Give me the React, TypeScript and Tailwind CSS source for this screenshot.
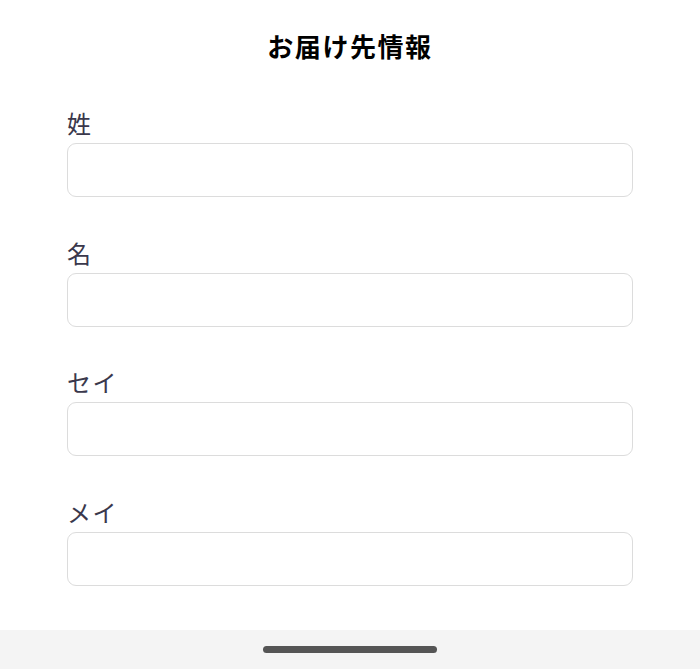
import React from "react";

const fields = ["姓", "名", "セイ", "メイ"];

export default function App() {
  return (
    <div
      className="w-[700px] h-[669px] flex flex-col bg-white"
      style={{ fontFamily: '"Noto Sans CJK JP", "Noto Sans", sans-serif' }}
    >
      <div className="flex-1 px-[67px] pt-[28px]">
        <h1 className="h-[36px] leading-[36px] text-center text-[26px] font-bold tracking-[0.06em] text-black">
          お届け先情報
        </h1>
        <div className="mt-[43px] flex flex-col gap-[39.5px]">
          {fields.map((f) => (
            <div key={f} className="flex flex-col gap-[4px]">
              <label className="h-[32px] leading-[32px] text-[24px] tracking-[0.06em] text-[#3a384c]">
                {f}
              </label>
              <input
                type="text"
                className="h-[54px] w-full rounded-[9px] border-[1.5px] border-[#dcdcdc] bg-white outline-none"
              />
            </div>
          ))}
        </div>
      </div>
      <div className="h-[39px] bg-[#f4f4f4] flex justify-center pt-[16px]">
        <div className="w-[174px] h-[7px] rounded-full bg-[#555555]" />
      </div>
    </div>
  );
}
